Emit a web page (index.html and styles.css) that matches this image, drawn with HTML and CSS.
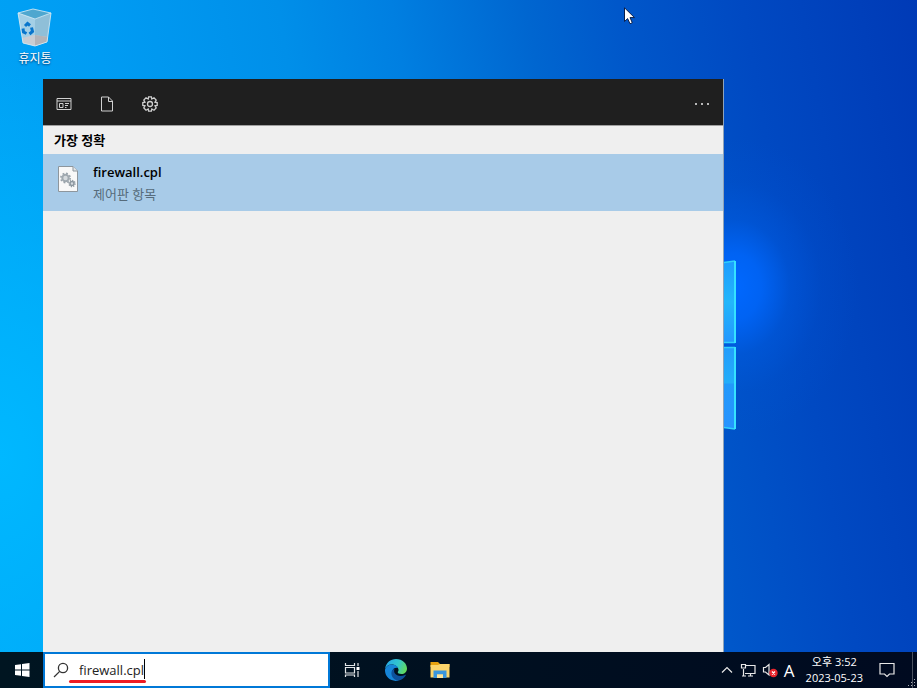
FILE: index.html
```html
<!DOCTYPE html>
<html lang="ko">
<head>
    <meta charset="UTF-8">
    <meta name="viewport" content="width=device-width, initial-scale=1.0">
    <title>firewall.cpl</title>
    <link rel="stylesheet" href="styles.css">
</head>
<body>
  <main class="desktop">
    <!-- wallpaper light and window panes -->
    <div class="glow"></div>
    <svg class="panes" width="90" height="176" viewBox="0 0 90 176" aria-hidden="true">
      <defs>
        <linearGradient id="pane-top" x1="0" y1="0" x2="0" y2="1">
          <stop offset="0" stop-color="#1e9cff"/>
          <stop offset=".5" stop-color="#22b6fb"/>
          <stop offset="1" stop-color="#2397ff"/>
        </linearGradient>
        <linearGradient id="pane-bottom" x1="0" y1="0" x2="0" y2="1">
          <stop offset="0" stop-color="#239cfc"/>
          <stop offset=".44" stop-color="#22aefa"/>
          <stop offset=".45" stop-color="#2299fb"/>
          <stop offset="1" stop-color="#2693ff"/>
        </linearGradient>
      </defs>
      <path d="M0 16 L88 4 V86 H0 Z" fill="url(#pane-top)"/>
      <path d="M0 90 H88 V172 L0 160 Z" fill="url(#pane-bottom)"/>
      <path d="M0 16 L88 4 M0 85.500 H88 M0 90.500 H88 M0 160 L88 172" fill="none" stroke="#2fd0fb" stroke-width="1.500"/>
      <path d="M88 4 V86 M88 90 V172" fill="none" stroke="#35e2ff" stroke-width="2"/>
    </svg>

    <a class="shortcut" href="#">
      <svg width="36" height="40" viewBox="0 0 36 40" aria-hidden="true">
        <path d="M1 5 L15 10 L19 37 L7 35 Z" fill="#8cc9e8"/>
        <path d="M18 11 L34 5 L30 34 L18 38 Z" fill="#8fbfd8"/>
        <path d="M1 5 L16 1 L34 5 L18 11 Z" fill="#4fa7cf"/>
        <path d="M1 5 L18 11 V38 L6 35 Z" fill="#a3cfe6"/>
        <path d="M5 30 L17 27 L31 29 L30 34 L18 38 L6 35 Z" fill="#c9cdd3"/>
        <path d="M18 27 L31 29 L30 34 L18 38 Z" fill="#b3b4b9"/>
        <path d="M1 5 L16 1 L34 5 L30 34 L18 38 L6 35 Z M1 5 L18 11 L34 5" fill="none" stroke="#d6eaf3" stroke-linejoin="round" opacity=".85"/>
        <g fill="none" stroke="#0875cc" stroke-width="3">
          <path d="M8 18 L10.500 15.500 L13 17.500"/>
          <path d="M14.500 19.500 L15.500 23.500 L12.500 26"/>
          <path d="M9.500 25.500 L6.500 24 L6 20.500"/>
        </g>
      </svg>
      <span>휴지통</span>
    </a>

    <section class="panel" aria-label="검색">
      <header class="panel-bar">
        <button type="button" aria-label="앱">
          <svg width="16" height="16" viewBox="0 0 16 16"><path d="M1 2.500 H15 V13.500 H1 Z M1 5 H15 M3.500 7.500 H7 V11.500 H3.500 Z M9 7.500 H13 M9 9.500 H12 M9 11.500 H10.500"/></svg>
        </button>
        <button type="button" aria-label="문서">
          <svg width="16" height="16" viewBox="0 0 16 16"><path d="M2.500 1 H9.500 L13.500 5 V15 H2.500 Z M9.500 1 V5.500 H13.500"/></svg>
        </button>
        <button type="button" aria-label="설정">
          <svg width="16" height="16" viewBox="0 0 16 16"><path stroke-width="1.300" d="M6.600 .8 H9.400 L9.800 3 L12 1.800 L14.200 4 L13 6.200 L15.200 6.600 V9.400 L13 9.800 L14.200 12 L12 14.200 L9.800 13 L9.400 15.200 H6.600 L6.200 13 L4 14.200 L1.800 12 L3 9.800 L.8 9.400 V6.600 L3 6.200 L1.800 4 L4 1.800 L6.200 3 Z"/><circle cx="8" cy="8" r="2.500" stroke-width="1.300"/></svg>
        </button>
        <button type="button" class="more" aria-label="옵션">
          <svg width="16" height="16" viewBox="0 0 16 16"><path d="M1 7 h2 v2 h-2 Z M7 7 h2 v2 h-2 Z M13 7 h2 v2 h-2 Z"/></svg>
        </button>
      </header>
      <h2 class="group-title">가장 정확</h2>
      <a class="result" href="#">
        <svg width="20" height="26" viewBox="0 0 20 26" aria-hidden="true">
          <path d="M.5 .5 H15 L19.500 5 V25.500 H.5 Z" fill="#f8f8f8" stroke="#8d969d"/>
          <path d="M15 .5 V5 H19.500" fill="#e2e5e7" stroke="#8d969d"/>
          <circle cx="7.500" cy="12" r="3.200" fill="#d5dade" stroke="#a0a9b0" stroke-width="2"/>
          <circle cx="7.500" cy="12" r="4.700" fill="none" stroke="#98a2aa" stroke-width="1.500" stroke-dasharray="1.800 1.900"/>
          <circle cx="14" cy="17.500" r="2" fill="#d5dade" stroke="#8c979f" stroke-width="1.500"/>
          <circle cx="14" cy="17.500" r="3.100" fill="none" stroke="#8c979f" stroke-width="1.200" stroke-dasharray="1.200 1.200"/>
        </svg>
        <span class="result-text">
          <strong>firewall.cpl</strong>
          <small>제어판 항목</small>
        </span>
      </a>
    </section>

    <svg class="cursor" width="12" height="18" viewBox="0 0 12 18" aria-hidden="true">
      <path d="M.5 .8 V14.500 L3.600 11.600 L6 16.800 L8.300 15.700 L6 10.600 H10.500 Z" fill="#fff" stroke="#0a1f4a"/>
    </svg>
  </main>

  <footer class="taskbar">
    <button type="button" class="start" aria-label="시작">
      <svg width="16" height="16" viewBox="0 0 16 16"><path d="M1 3 L7 2.200 V7.500 H1 Z M8 2 L15.500 1 V7.500 H8 Z M1 8.500 H7 V13.800 L1 13 Z M8 8.500 H15.500 V15 L8 14 Z" fill="#fff"/></svg>
    </button>

    <div class="search">
      <label for="search-box" aria-label="검색">
        <svg width="16" height="16" viewBox="0 0 16 16"><circle cx="10" cy="6" r="4.600" fill="none" stroke="#333" stroke-width="1.300"/><path d="M6.700 9.400 L1 15" fill="none" stroke="#333" stroke-width="1.300"/></svg>
      </label>
      <input type="text" id="search-box" value="firewall.cpl" spellcheck="false" autocomplete="off">
      <span class="caret"></span>
      <span class="underline"></span>
    </div>

    <nav class="apps">
      <button type="button" aria-label="작업 보기">
        <svg width="16" height="16" viewBox="0 0 16 16"><path d="M1.500 1 V3.500 H10.500 V1 M1.500 5.500 H10.500 V11 H1.500 Z M1.500 15 V13 H10.500 V15 M14 1 V4 M14 9 V15" fill="none" stroke="#e2e5e7" stroke-width="1.200"/><path d="M12.500 5 H15.500 V8 H12.500 Z" fill="#fff"/></svg>
      </button>
      <button type="button" aria-label="Microsoft Edge">
        <svg width="22" height="22" viewBox="0 0 22 22">
          <defs>
            <linearGradient id="edge-top" x1="0" y1=".3" x2="1" y2=".6">
              <stop offset="0" stop-color="#26a8e8"/>
              <stop offset=".55" stop-color="#32c6cd"/>
              <stop offset="1" stop-color="#63da58"/>
            </linearGradient>
          </defs>
          <path d="M0 10 C1 3.500 5.500 0 11 0 C17.500 0 22 4.500 22 9.500 C22 13 19.500 15 16.500 15 C14 15 12.500 14 12.800 13 C13.200 12.300 13.700 11.600 13.500 10.500 C13 7.500 10 5.500 6.500 5.500 C3.500 5.500 1.200 7.500 0 10 Z" fill="url(#edge-top)"/>
          <path d="M0 10.500 C1 7.500 3.500 5.500 6.500 5.500 C10 5.500 12.500 7.200 13.300 9 C11 8 8 9 7.300 12 C6.500 16 9.500 20.500 14 21.500 C6 23.500 -.5 18 0 10.500 Z" fill="#1685d8"/>
          <path d="M8 10.500 C6 12 5.800 16 8 18.700 C9.500 20.600 12 21.800 14 21.500 C17 20.600 19.500 18.500 20.800 16.200 C21 15.600 20.500 15.600 20 15.900 C16 17.800 11.500 17 9.600 14 C9 12.700 9 11.500 9.500 10 Z" fill="#0d519c"/>
        </svg>
      </button>
      <button type="button" aria-label="파일 탐색기">
        <svg width="20" height="18" viewBox="0 0 20 18">
          <path d="M.5 1 H8 L10 3 H19.500 V6 H.5 Z" fill="#e8a20e"/>
          <path d="M.5 4 H8 L10 3 H19.500 V16.500 H.5 Z" fill="#fcd56b"/>
          <path d="M3.500 17 V9.500 H16.500 V17 H13 V13.500 H7 V17 Z" fill="#3a96dd"/>
          <path d="M7 17 V13.500 H13 V17 Z" fill="#ffe59b"/>
        </svg>
      </button>
    </nav>

    <div class="tray">
      <button type="button" aria-label="숨겨진 아이콘 표시">
        <svg width="14" height="16" viewBox="0 0 14 16"><path d="M2 10.500 L7 5.500 L12 10.500"/></svg>
      </button>
      <button type="button" aria-label="네트워크">
        <svg width="16" height="16" viewBox="0 0 16 16"><path d="M6 3.500 H15 V11.500 H5 M3.500 7 V13.500 M8 14 H13 M10.500 11.500 V14 M2 14 H6"/><path d="M1.500 2.500 H5.500 V6 H1.500 Z"/></svg>
      </button>
      <button type="button" aria-label="볼륨">
        <svg width="16" height="16" viewBox="0 0 16 16"><path d="M1.500 5.500 H3.500 L7 2.500 V13 L3.500 10 H1.500 Z"/><circle cx="11.500" cy="11" r="4.200" fill="#e8242c" stroke="none"/><path d="M10 9.500 L13 12.500 M13 9.500 L10 12.500" stroke="#fff"/></svg>
      </button>
      <button type="button" class="ime">A</button>
      <div class="clock">
        <span>오후 3:52</span>
        <span>2023-05-23</span>
      </div>
      <button type="button" class="notice" aria-label="알림">
        <svg width="16" height="16" viewBox="0 0 16 16"><path d="M1 1.500 H15 V12 H10.500 L8 14.500 L5.500 12 H1 Z"/></svg>
      </button>
      <span class="peek"></span>
    </div>
    <svg class="grip" width="8" height="8" viewBox="0 0 8 8" aria-hidden="true"><path d="M6 0 h1 v1 h-1 Z M3 3 h1 v1 h-1 Z M6 3 h1 v1 h-1 Z M0 6 h1 v1 h-1 Z M3 6 h1 v1 h-1 Z M6 6 h1 v1 h-1 Z" fill="#a9adb5"/></svg>
  </footer>
</body>
</html>
```
FILE: styles.css
```css
* {
  box-sizing: border-box;
}

body {
  margin: 0;
  display: flex;
  flex-direction: column;
  min-height: 100vh;
  font-family: "Open Sans", "Noto Sans CJK KR", sans-serif;
  font-size: 12px;
}

button {
  display: flex;
  align-items: center;
  justify-content: center;
  padding: 0;
  border: none;
  background: none;
  color: #fff;
  font: inherit;
}

a {
  color: inherit;
  text-decoration: none;
}

.desktop {
  position: relative;
  flex: 1;
  overflow: hidden;
  background: linear-gradient(80deg, #00a6f6 0%, #009cf3 20%, #008fe9 38%, #007fe1 49%, #0066d0 62%, #0057ca 71%, #0049c2 83%, #003ab6 100%);
}

/* brighter left edge, light behind the window panes */
.glow {
  position: absolute;
  inset: 0;
  background:
    radial-gradient(ellipse 125px 150px at 80% 44%, rgba(0, 104, 255, 1) 0%, rgba(0, 104, 255, .8) 22%, rgba(0, 98, 240, .35) 45%, rgba(0, 90, 225, .12) 70%, rgba(0, 90, 225, 0) 100%),
    radial-gradient(ellipse 260px 400px at 0% 70%, rgba(0, 184, 255, 1) 0%, rgba(0, 180, 255, 0) 100%);
}

.panes {
  position: absolute;
  right: 180px;
  top: 257px;
}

.shortcut {
  position: absolute;
  left: 9px;
  top: 8px;
  width: 52px;
  display: flex;
  flex-direction: column;
  align-items: center;
  gap: 2px;
  color: #fff;
  font-size: 12px;
  line-height: 18px;
  text-shadow: 0 1px 2px #00356a;
}

.panel {
  position: absolute;
  left: 43px;
  right: 193px;
  top: 79px;
  bottom: 0;
  background-color: #efefef;
  border-right: 1px solid #8fa3b8;
}

.panel-bar {
  display: flex;
  align-items: center;
  gap: 27px;
  height: 47px;
  padding: 3px 13px 0;
  background-color: #1f1f1f;
  border-bottom: 1px solid #a0a0a0;
}

.panel-bar svg {
  fill: none;
  stroke: #d0d0d0;
}

.panel-bar .more {
  margin-left: auto;
}

.panel-bar .more svg {
  fill: #b8b8b8;
  stroke: none;
}

.group-title {
  margin: 0;
  padding: 1px 11px 0;
  font-size: 13px;
  font-weight: 600;
  line-height: 27px;
}

.result {
  display: flex;
  gap: 15px;
  height: 57px;
  padding: 8px 15px;
  background-color: #a8cbe8;
}

.result svg {
  margin-top: 4px;
}

.result-text {
  display: flex;
  flex-direction: column;
  gap: 2px;
}

.result strong {
  font-size: 13px;
  font-weight: 600;
  line-height: 20px;
}

.result small {
  color: #566b7b;
  font-size: 13px;
  line-height: 20px;
}

.cursor {
  position: absolute;
  left: 68%;
  top: 7px;
}

.taskbar {
  position: relative;
  display: flex;
  height: 36px;
  background: linear-gradient(90deg, #001521, #001020 50%, #000a20);
}

.start {
  width: 43px;
}

.search {
  position: relative;
  display: flex;
  align-items: center;
  width: 287px;
  padding-left: 8px;
  background-color: #fff;
  border: 2px solid #0078d7;
}

.search label {
  display: flex;
}

.search input {
  flex: 1;
  min-width: 0;
  padding: 0 0 0 10px;
  border: none;
  outline: none;
  background: none;
  color: #222;
  font-family: inherit;
  font-size: 13px;
}

.caret {
  position: absolute;
  left: 99px;
  top: 5px;
  width: 1px;
  height: 20px;
  background-color: #000;
}

.underline {
  position: absolute;
  left: 24px;
  bottom: 3px;
  width: 77px;
  height: 3px;
  border-radius: 2px;
  background-color: #ed1c24;
}

.apps {
  display: flex;
}

.apps button {
  width: 44px;
}

.tray {
  display: flex;
  align-items: center;
  gap: 6px;
  margin-left: auto;
  color: #fff;
}

.tray svg {
  fill: none;
  stroke: #e8e8e8;
  stroke-width: 1.2;
}

.ime {
  font-size: 17px;
}

.clock {
  display: flex;
  flex-direction: column;
  margin: 0 4px 0 5px;
  font-size: 11px;
  line-height: 16px;
  text-align: center;
}

.notice {
  width: 28px;
}

.peek {
  align-self: stretch;
  width: 5px;
  margin-left: 5px;
  border-left: 1px solid #4a5160;
}

.grip {
  position: absolute;
  right: 1px;
  bottom: 1px;
}
```
